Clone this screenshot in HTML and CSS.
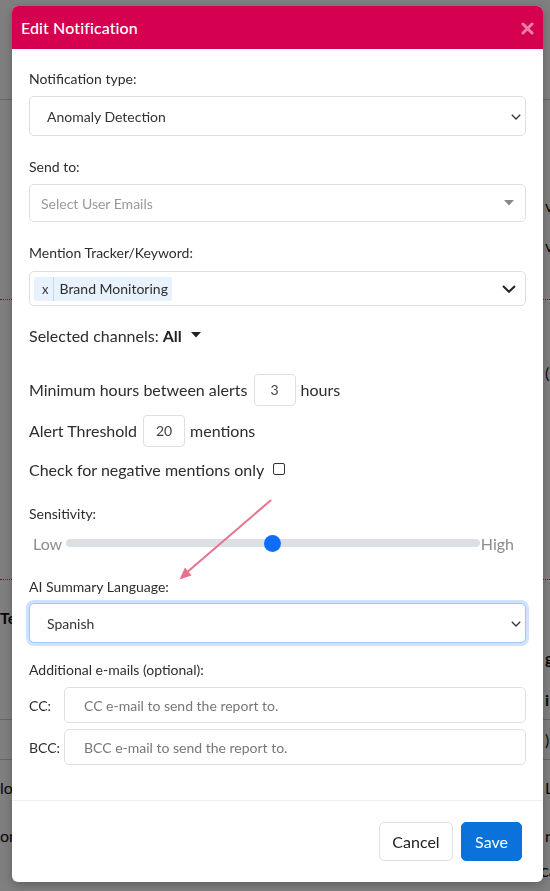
FILE: index.html
```html
<!DOCTYPE html>
<html lang="en">
<head>
<meta charset="utf-8">
<title>Edit Notification</title>
<link rel="stylesheet" href="styles.css">
</head>
<body>
<div class="page">
  <div class="pg-row pg-h100 pg-line"></div>
  <div class="pg-row pg-h85"></div>
  <div class="pg-row pg-h40"><span></span><span class="pg-r">v</span></div>
  <div class="pg-row pg-h40"><span></span><span class="pg-r">v</span></div>
  <div class="pg-row pg-h35 pg-dotted"></div>
  <div class="pg-row pg-h52"></div>
  <div class="pg-row pg-h40"><span></span><span class="pg-r">(</span></div>
  <div class="pg-row pg-h188 pg-dotted"></div>
  <div class="pg-row pg-h20"></div>
  <div class="pg-row pg-h35"><span class="pg-l bold">Team</span><span></span></div>
  <div class="pg-row pg-h45"><span></span><span class="pg-r bold">g</span></div>
  <div class="pg-row pg-h40 pg-line"><span></span><span class="pg-r bold">i</span></div>
  <div class="pg-row pg-h40 pg-line"><span></span><span class="pg-r">)</span></div>
  <div class="pg-row pg-h55"><span class="pg-l">lo</span><span class="pg-r">L</span></div>
  <div class="pg-row pg-h40"><span class="pg-l">on</span><span class="pg-r">r</span></div>
  <div class="pg-row pg-h40 pg-bottom"><span class="pg-other">Other emails to send critical alerts</span></div>
</div>

<div class="backdrop"></div>

<div class="modal">
  <div class="modal-header">
    <h5 class="modal-title">Edit Notification</h5>
    <svg class="close" width="13" height="13" viewBox="0 0 13 13"><path d="M2 2 L11 11 M11 2 L2 11" stroke="currentColor" stroke-width="3" stroke-linecap="round"/></svg>
  </div>

  <div class="modal-body">
    <div class="lbl m19">Notification type:</div>
    <div class="select h40 m6">
      <span class="sel-text">Anomaly Detection</span>
      <svg class="chev-sm" width="10" height="6" viewBox="0 0 10 6"><path d="M0.8 0.8 L5 5 L9.2 0.8" fill="none" stroke="#333" stroke-width="1.3"/></svg>
    </div>

    <div class="lbl m20">Send to:</div>
    <div class="select h38 m6 pad11">
      <span class="placeholder">Select User Emails</span>
      <svg class="caret-grey" width="10" height="6" viewBox="0 0 10 6"><path d="M0 0 L10 0 L5 5.5 Z" fill="#888"/></svg>
    </div>

    <div class="lbl m20">Mention Tracker/Keyword:</div>
    <div class="select h35 m7 pad4">
      <span class="chip"><span class="chip-x">x</span><span class="chip-text">Brand Monitoring</span></span>
      <svg class="chev-lg" width="14" height="8" viewBox="0 0 14 8"><path d="M1 1 L7 6.8 L13 1" fill="none" stroke="#222" stroke-width="2"/></svg>
    </div>

    <div class="big m18 channels">Selected channels: <b>All</b><svg class="caret-dark" width="10" height="6" viewBox="0 0 10 6"><path d="M0 0 L10 0 L5 5.5 Z" fill="#222"/></svg></div>

    <div class="big inline-row m26">Minimum hours between alerts <span class="num">3</span> hours</div>
    <div class="big inline-row m9">Alert Threshold <span class="num">20</span> mentions</div>
    <div class="big check-row m11">Check for negative mentions only <span class="checkbox"></span></div>

    <div class="lbl m21">Sensitivity:</div>
    <div class="slider-row m6">
      <span class="slider-end">Low</span>
      <div class="track"><span class="thumb"></span></div>
      <span class="slider-end">High</span>
    </div>

    <div class="lbl m21">AI Summary Language:</div>
    <div class="select h40 m5 focused">
      <span class="sel-text">Spanish</span>
      <svg class="chev-sm" width="10" height="6" viewBox="0 0 10 6"><path d="M0.8 0.8 L5 5 L9.2 0.8" fill="none" stroke="#333" stroke-width="1.3"/></svg>
    </div>

    <div class="lbl m16">Additional e-mails (optional):</div>
    <div class="email-row m6">
      <span class="email-lbl">CC:</span>
      <div class="input"><span class="placeholder2">CC e-mail to send the report to.</span></div>
    </div>
    <div class="email-row m6">
      <span class="email-lbl">BCC:</span>
      <div class="input"><span class="placeholder2">BCC e-mail to send the report to.</span></div>
    </div>
  </div>

  <div class="modal-footer">
    <button class="btn btn-cancel">Cancel</button>
    <button class="btn btn-save">Save</button>
  </div>
</div>

<svg class="annot" width="550" height="891" viewBox="0 0 550 891">
  <line x1="270.5" y1="500.5" x2="185" y2="574" stroke="#e8718c" stroke-width="2" stroke-linecap="round"/>
  <path d="M179.5 579.5 L191.5 575.5 L185 567.5 Z" fill="#e8718c"/>
</svg>
</body>
</html>
```

FILE: styles.css
```css
* { box-sizing: border-box; }

html, body {
  margin: 0;
  padding: 0;
  width: 550px;
  height: 891px;
  overflow: hidden;
}

body {
  font-family: "Lato", "Liberation Sans", sans-serif;
  color: #2d2d2d;
  background: #fff;
  position: relative;
}

/* ---------- background page ---------- */
.page {
  width: 550px;
}
.pg-row {
  display: grid;
  grid-template-columns: 545px 1fr;
  align-items: center;
  font-size: 16px;
  color: #111;
  white-space: nowrap;
  overflow: hidden;
}
.pg-h20 { height: 20px; }
.pg-h35 { height: 35px; }
.pg-h40 { height: 40px; }
.pg-h45 { height: 45px; }
.pg-h52 { height: 52px; }
.pg-h55 { height: 55px; }
.pg-h85 { height: 85px; }
.pg-h100 { height: 100px; }
.pg-h188 { height: 188px; }
.pg-line { border-bottom: 1px solid #cfcfcf; }
.pg-dotted { border-bottom: 1px dotted #e33; }
.pg-l { padding-left: 0; }
.pg-r { padding-left: 0; }
.bold { font-weight: 700; }
.pg-bottom {
  grid-template-columns: 1fr;
  align-items: start;
}
.pg-other {
  padding-left: 341px;
  padding-top: 4px;
  font-size: 18px;
}

.backdrop {
  position: fixed;
  inset: 0;
  background: rgba(0, 0, 0, 0.5);
}

/* ---------- modal ---------- */
.modal {
  position: absolute;
  left: 12px;
  top: 6px;
  width: 531px;
  height: 876px;
  background: #fff;
  border-radius: 6px;
  overflow: hidden;
  display: flex;
  flex-direction: column;
  box-shadow: 0 3px 10px rgba(0, 0, 0, 0.25);
}

.modal-header {
  height: 43px;
  flex: none;
  background: #d5004f;
  display: flex;
  align-items: center;
  justify-content: space-between;
  padding: 0 9px 0 9px;
}
.modal-title {
  margin: 0;
  font-size: 16px;
  font-weight: 500;
  color: #fff;
  letter-spacing: 0.1px;
}
.close {
  color: rgba(255, 255, 255, 0.5);
  margin-top: 1px;
}

.modal-body {
  flex: 1;
  padding: 0 17px 0 17px;
}

.lbl {
  font-size: 14px;
  line-height: 22px;
  color: #2d2d2d;
}
.big {
  font-size: 16px;
  line-height: 24px;
  color: #2d2d2d;
}

.m5 { margin-top: 5px; }
.m6 { margin-top: 6px; }
.m7 { margin-top: 7px; }
.m9 { margin-top: 9px; }
.m11 { margin-top: 11px; }
.m16 { margin-top: 16px; }
.m18 { margin-top: 18px; }
.m19 { margin-top: 19px; }
.m20 { margin-top: 20px; }
.m21 { margin-top: 21px; }
.m26 { margin-top: 26px; }

.select {
  border: 1px solid #dcdfe3;
  border-radius: 5px;
  display: flex;
  align-items: center;
  justify-content: space-between;
  padding: 0 4px 0 17px;
  background: #fff;
}
.h35 { height: 35px; }
.h38 { height: 38px; }
.h40 { height: 40px; }
.pad11 { padding-left: 11px; padding-right: 11px; }
.pad4 { padding-left: 4px; padding-right: 9px; }

.sel-text {
  font-size: 14px;
  color: #333;
}
.placeholder {
  font-size: 14px;
  color: #999;
}
.chev-sm { margin-top: 1px; }

.chip {
  display: inline-flex;
  align-items: stretch;
  height: 24px;
  background: #e8f2fd;
  border-radius: 2px;
}
.chip-x {
  display: flex;
  align-items: center;
  padding: 0 5px 0 8px;
  font-size: 13px;
  color: #333;
  border-right: 1px solid #c4d8ee;
}
.chip-text {
  display: flex;
  align-items: center;
  padding: 0 4px 0 5px;
  font-size: 14px;
  color: #2d2d2d;
}

.channels {
  display: flex;
  align-items: center;
}
.channels b {
  margin-left: 4px;
  font-weight: 700;
  color: #222;
}
.caret-dark { margin-left: 9px; margin-top: -2px; }

.inline-row {
  display: flex;
  align-items: center;
  height: 32px;
}
.num {
  display: inline-flex;
  align-items: center;
  justify-content: center;
  width: 42px;
  height: 32px;
  border: 1px solid #dcdfe3;
  border-radius: 4px;
  font-size: 14px;
  color: #444;
  margin: 0 5px 0 6px;
}

.check-row {
  display: flex;
  align-items: center;
}
.checkbox {
  display: inline-block;
  width: 12px;
  height: 12px;
  border: 1.5px solid #333;
  border-radius: 2px;
  margin-left: 9px;
  margin-top: -2px;
}

.slider-row {
  display: flex;
  align-items: center;
  height: 24px;
  padding: 0 12px 0 4px;
}
.slider-end {
  font-size: 16px;
  color: #8c8c8c;
}
.track {
  flex: 1;
  height: 8px;
  background: #dcdfe3;
  border-radius: 4px;
  display: flex;
  align-items: center;
  justify-content: center;
  margin: 0 1px 0 4px;
}
.thumb {
  flex: none;
  width: 17px;
  height: 17px;
  border-radius: 50%;
  background: #0d6efd;
}

.focused {
  border-color: #9ec5fe;
  box-shadow: 0 0 0 3px #cfe2ff;
}

.email-row {
  display: grid;
  grid-template-columns: 35px 1fr;
  align-items: center;
}
.email-lbl {
  font-size: 14px;
  color: #2d2d2d;
}
.input {
  height: 36px;
  border: 1px solid #dcdfe3;
  border-radius: 5px;
  display: flex;
  align-items: center;
  padding-left: 19px;
}
.placeholder2 {
  font-size: 14px;
  color: #777;
}

.modal-footer {
  flex: none;
  height: 82px;
  border-top: 1px solid #eeeeee;
  display: flex;
  align-items: center;
  justify-content: flex-end;
  gap: 8px;
  padding: 0 21px 0 0;
}
.btn {
  height: 39px;
  border-radius: 5px;
  font-family: inherit;
  font-size: 16px;
  padding: 0;
  cursor: pointer;
}
.btn-cancel {
  width: 74px;
  background: #fff;
  border: 1px solid #dcdfe3;
  color: #222;
}
.btn-save {
  width: 61px;
  background: #0a72da;
  border: 1px solid #0a72da;
  color: #fff;
}

.annot {
  position: absolute;
  left: 0;
  top: 0;
  pointer-events: none;
}
```
